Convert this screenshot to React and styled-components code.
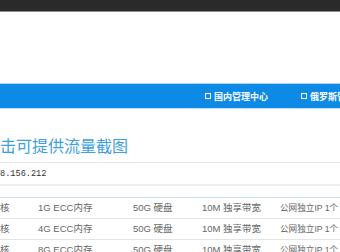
import React from 'react';
import styled, { createGlobalStyle } from 'styled-components';

const Global = createGlobalStyle`
  html, body {
    margin: 0;
    padding: 0;
    background: #fff;
    overflow: hidden;
    scrollbar-width: none;
  }
  ::-webkit-scrollbar {
    display: none;
  }
  body {
    font-family: "Noto Sans CJK SC", "Liberation Sans", sans-serif;
  }
`;

const Page = styled.div`
  width: 340px;
  height: 252px;
  overflow: hidden;
`;

const TopBar = styled.div`
  height: 11px;
  background: #2a2a2a;
  border-bottom: 1px solid #8c8c8c;
`;

const Hero = styled.div`
  height: 71px;
  background: #fff;
`;

const NavBar = styled.div`
  height: 24px;
  background: #0c8ae6;
  border-top: 1px solid #a6d6f8;
  border-bottom: 1px solid #bfe0f8;
  display: flex;
  align-items: center;
  gap: 33px;
  padding-left: 205px;
  white-space: nowrap;
  overflow: hidden;
`;

const NavItem = styled.div`
  display: flex;
  align-items: center;
  gap: 3px;
  color: #fff;
  font-size: 9px;
  font-weight: 700;
  line-height: 1;
`;

const Box = styled.span`
  width: 4px;
  height: 4px;
  border: 1px solid #fff;
  flex: none;
`;

const Content = styled.div`
  padding-top: 26px;
`;

const Title = styled.div`
  font-size: 16px;
  line-height: 20px;
  color: #3d9fe0;
  padding-bottom: 7px;
  border-bottom: 1px solid #e6e6e6;
  white-space: nowrap;
`;

const Ip = styled.div`
  font-family: "Liberation Mono", monospace;
  font-size: 8.6px;
  line-height: 20px;
  color: #333;
  padding-top: 1px;
  border-bottom: 2px solid #eeeeee;
`;

const Table = styled.div`
  margin-top: 11px;
  border-top: 1px solid #c4e1f6;
`;

const Row = styled.div`
  display: grid;
  grid-template-columns: 38px 95px 69px 78px 1fr;
  height: 20px;
  align-items: center;
  border-bottom: 1px solid #e4e4e4;
  white-space: nowrap;
`;

const Cell = styled.div`
  font-family: "Liberation Sans", "Noto Sans CJK SC", sans-serif;
  font-size: ${(p) => (p.$tight ? '8.6px' : '9.5px')};
  color: #666;
  line-height: 1;
`;

const rows = ['1G', '4G', '8G'];

export default function App() {
  return (
    <Page>
      <Global />
      <TopBar />
      <Hero />
      <NavBar>
        <NavItem><Box />国内管理中心</NavItem>
        <NavItem><Box />俄罗斯管理中心</NavItem>
      </NavBar>
      <Content>
        <Title>击可提供流量截图</Title>
        <Ip>8.156.212</Ip>
        <Table>
          {rows.map((mem) => (
            <Row key={mem}>
              <Cell>核</Cell>
              <Cell>{mem} ECC内存</Cell>
              <Cell>50G 硬盘</Cell>
              <Cell>10M 独享带宽</Cell>
              <Cell $tight>公网独立IP 1个</Cell>
            </Row>
          ))}
        </Table>
      </Content>
    </Page>
  );
}
